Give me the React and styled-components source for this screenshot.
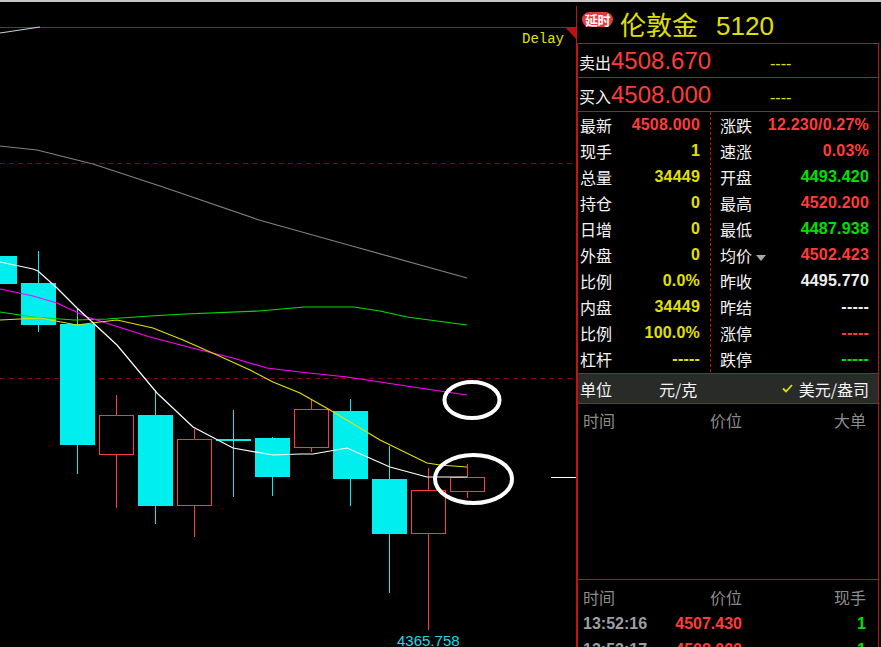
import React from "react";
import styled, { createGlobalStyle } from "styled-components";

const RED_LINE = "#c41212";
const RED = "#ff3b3b";
const YELLOW = "#e0e000";
const GREEN = "#00e000";
const WHITE = "#f4f4f4";
const GRAY = "#8c8c8c";
const CYAN = "#00eeee";

const GlobalStyle = createGlobalStyle`
  html, body {
    margin: 0;
    padding: 0;
    background: #000;
  }
  body {
    font-family: "Noto Sans CJK SC", "Liberation Sans", sans-serif;
  }
`;

const Screen = styled.div`
  width: 881px;
  height: 647px;
  background: #000;
  overflow: hidden;
  display: flex;
  flex-direction: column;
`;

const TopBar = styled.div`
  height: 2px;
  flex: none;
  background: #c6c6c6;
`;

const Main = styled.div`
  display: flex;
  flex: 1;
  min-height: 0;
`;

const ChartArea = styled.div`
  width: 576px;
  flex: none;
  svg {
    display: block;
  }
`;

const Panel = styled.div`
  flex: 1;
  display: flex;
  flex-direction: column;
  margin-top: 4px;
  border-left: 1px solid ${RED_LINE};
  min-width: 0;
  min-height: 0;
`;

const PanelHeader = styled.div`
  height: 37px;
  display: flex;
  align-items: center;
  padding-left: 5px;
  flex: none;
`;

const Badge = styled.span`
  align-self: flex-start;
  margin-top: 6px;
  width: 31px;
  height: 15px;
  border-radius: 8px;
  background: #e43a3a;
  color: #fff;
  font-size: 13px;
  font-weight: bold;
  line-height: 15px;
  text-align: center;
  letter-spacing: -0.5px;
`;

const Title = styled.span`
  margin-left: 7px;
  color: ${YELLOW};
  font-size: 26px;
  line-height: 30px;
`;

const Code = styled.span`
  margin-left: 18px;
  font-family: "Liberation Sans", sans-serif;
`;

const Box = styled.div`
  flex: 1;
  display: flex;
  flex-direction: column;
  border: 1px solid ${RED_LINE};
  border-bottom: none;
  margin-right: 2px;
  min-height: 0;
  overflow: hidden;
`;

const QuoteRow = styled.div`
  height: 34px;
  flex: none;
  box-sizing: border-box;
  border-bottom: 1px solid ${RED_LINE};
  display: grid;
  grid-template-columns: 191px 1fr;
  align-items: baseline;
  padding: 4px 0 0 1px;
`;

const QuoteMain = styled.div`
  display: flex;
  align-items: baseline;
`;

const QuoteLabel = styled.span`
  color: ${WHITE};
  font-size: 16px;
`;

const QuoteValue = styled.span`
  color: ${RED};
  font-family: "Liberation Sans", sans-serif;
  font-size: 24px;
  line-height: 26px;
`;

const QuoteDash = styled.span`
  color: ${YELLOW};
  font-family: "Liberation Sans", sans-serif;
  font-size: 16px;
`;

const Stats = styled.div`
  display: grid;
  grid-template-columns: 133px 1fr;
  border-bottom: 1px solid ${RED_LINE};
  padding-bottom: 1px;
  flex: none;
`;

const StatCol = styled.div`
  display: flex;
  flex-direction: column;
  box-sizing: border-box;
  padding: ${(p) => (p.left ? "0 10px 0 2px" : "0 9px 0 9px")};
  border-right: ${(p) => (p.left ? `1px dashed ${RED_LINE}` : "none")};
`;

const StatRow = styled.div`
  height: 26px;
  display: flex;
  align-items: center;
  justify-content: space-between;
`;

const Label = styled.span`
  color: ${WHITE};
  font-size: 16px;
  line-height: 26px;
  display: flex;
  align-items: center;
`;

const Caret = styled.i`
  width: 0;
  height: 0;
  margin: 6px 0 0 4px;
  border-left: 5px solid transparent;
  border-right: 5px solid transparent;
  border-top: 6px solid #a8a8a8;
`;

const Value = styled.span`
  color: ${(p) => p.color};
  font-family: "Liberation Sans", sans-serif;
  font-weight: bold;
  font-size: 16px;
  letter-spacing: 0.2px;
`;

const UnitRow = styled.div`
  height: 29px;
  flex: none;
  display: flex;
  align-items: center;
  background: #282b27;
  border-bottom: 1px solid ${RED_LINE};
  padding: 0 9px 0 2px;
  color: ${WHITE};
  font-size: 16px;
`;

const UnitValue = styled.span`
  margin-left: 47px;
`;

const UnitChoice = styled.span`
  margin-left: auto;
  display: flex;
  align-items: center;
  gap: 6px;
`;

const Orders = styled.div`
  height: 176px;
  flex: none;
  border-bottom: 1px solid ${RED_LINE};
  padding-top: 4px;
  box-sizing: border-box;
`;

const Ticks = styled.div`
  flex: 1;
  min-height: 0;
  padding-top: 5px;
`;

const GridRow = styled.div`
  display: grid;
  grid-template-columns: 77px 82px 1fr;
  padding: 0 12px 0 5px;
  height: ${(p) => (p.head ? 24 : 26)}px;
  margin-bottom: ${(p) => (p.head ? 2 : 0)}px;
  align-items: center;
  & > :not(:first-child) {
    text-align: right;
  }
`;

const HeadCell = styled.span`
  color: ${GRAY};
  font-size: 16px;
`;

const Cell = styled.span`
  color: ${(p) => p.color};
  font-family: "Liberation Sans", sans-serif;
  font-weight: bold;
  font-size: 16px;
`;

const candles = [
  { x: -18, top: 256, bottom: 284, high: 256, low: 284, up: false },
  { x: 21, top: 283, bottom: 325, high: 251, low: 332, up: false },
  { x: 60, top: 324, bottom: 445, high: 308, low: 474, up: false },
  { x: 99, top: 415, bottom: 455, high: 395, low: 508, up: true },
  { x: 138, top: 415, bottom: 506, high: 390, low: 524, up: false },
  { x: 177, top: 439, bottom: 506, high: 429, low: 537, up: true },
  { x: 216, top: 439, bottom: 441, high: 410, low: 497, up: false },
  { x: 255, top: 438, bottom: 477, high: 437, low: 496, up: false },
  { x: 294, top: 409, bottom: 448, high: 399, low: 452, up: true },
  { x: 333, top: 411, bottom: 479, high: 399, low: 506, up: false },
  { x: 372, top: 479, bottom: 534, high: 446, low: 593, up: false },
  { x: 411, top: 490, bottom: 534, high: 468, low: 630, up: true },
  { x: 450, top: 477, bottom: 492, high: 464, low: 498, up: true },
];

const lines = [
  { color: "#cfcfcf", pts: "0,33 40,27" },
  { color: "#808080", pts: "0,146 37,150 93,164 163,187 259,220 352,246 467,278" },
  { color: "#00e000", pts: "0,312 33,317 74,320 107,319 150,316 185,314 259,311 304,307 354,307 380,311 407,317 467,325" },
  { color: "#ff00ff", pts: "0,289 33,296 57,303 87,317 100,321 150,337 200,350 233,358 267,368 300,372 347,377 413,387 467,395" },
  { color: "#e0e000", pts: "0,320 40,318 77,325 100,322 117,320 153,328 183,340 217,355 250,370 273,382 300,393 330,410 380,440 427,463 440,465 467,467" },
  { color: "#ffffff", pts: "0,262 33,269 38,271 57,288 77,308 117,345 157,393 193,427 233,448 273,455 300,454 313,454 347,448 390,467 427,477 467,477" },
];

const KChart = () => (
  <svg width="576" height="645" viewBox="0 2 576 645">
    <line x1="0" y1="27.5" x2="576" y2="27.5" stroke="#b01414" />
    <polygon points="565,27 576,27 576,39" fill="#c01010" />
    <text x="522" y="43" fill={YELLOW} fontFamily="Liberation Mono, monospace" fontSize="14">
      Delay
    </text>
    <line x1="0" y1="163.5" x2="576" y2="163.5" stroke="#8b0000" strokeDasharray="5 4" />
    <line x1="0" y1="378.5" x2="576" y2="378.5" stroke="#8b0000" strokeDasharray="5 4" />
    {candles.map((c, i) => {
      const mid = c.x + 17.5;
      const color = c.up ? RED : CYAN;
      return (
        <g key={i} shapeRendering="crispEdges">
          <line x1={mid} y1={c.high} x2={mid} y2={c.low} stroke={color} />
          {c.up ? (
            <rect x={c.x + 0.5} y={c.top + 0.5} width="34" height={c.bottom - c.top - 1} fill="#000" stroke={color} />
          ) : (
            <rect x={c.x} y={c.top} width="35" height={c.bottom - c.top} fill={color} />
          )}
        </g>
      );
    })}
    {lines.map((l, i) => (
      <polyline key={i} points={l.pts} fill="none" stroke={l.color} strokeWidth="1.2" />
    ))}
    <line x1="551" y1="477.5" x2="576" y2="477.5" stroke="#fff" />
    <ellipse cx="472" cy="400" rx="27.5" ry="18" fill="none" stroke="#fff" strokeWidth="4" />
    <ellipse cx="473.5" cy="479" rx="38.5" ry="24" fill="none" stroke="#fff" strokeWidth="4" />
    <text x="397" y="646" fill="#18dce6" fontFamily="Liberation Sans, sans-serif" fontSize="15">
      4365.758
    </text>
  </svg>
);

const leftStats = [
  ["最新", "4508.000", RED],
  ["现手", "1", YELLOW],
  ["总量", "34449", YELLOW],
  ["持仓", "0", YELLOW],
  ["日增", "0", YELLOW],
  ["外盘", "0", YELLOW],
  ["比例", "0.0%", YELLOW],
  ["内盘", "34449", YELLOW],
  ["比例", "100.0%", YELLOW],
  ["杠杆", "-----", YELLOW],
];

const rightStats = [
  ["涨跌", "12.230/0.27%", RED],
  ["速涨", "0.03%", RED],
  ["开盘", "4493.420", GREEN],
  ["最高", "4520.200", RED],
  ["最低", "4487.938", GREEN],
  ["均价", "4502.423", RED, true],
  ["昨收", "4495.770", "#eeeeee"],
  ["昨结", "-----", "#eeeeee"],
  ["涨停", "-----", RED],
  ["跌停", "-----", GREEN],
];

const CheckMark = () => (
  <svg width="11" height="9" viewBox="0 0 11 9">
    <polyline points="1,4.5 4,7.5 10,1" fill="none" stroke={YELLOW} strokeWidth="1.8" />
  </svg>
);

export default function App() {
  return (
    <>
      <GlobalStyle />
      <Screen>
        <TopBar />
        <Main>
          <ChartArea>
            <KChart />
          </ChartArea>
          <Panel>
            <PanelHeader>
              <Badge>延时</Badge>
              <Title>
                伦敦金<Code>5120</Code>
              </Title>
            </PanelHeader>
            <Box>
              <QuoteRow>
                <QuoteMain>
                  <QuoteLabel>卖出</QuoteLabel>
                  <QuoteValue>4508.670</QuoteValue>
                </QuoteMain>
                <QuoteDash>----</QuoteDash>
              </QuoteRow>
              <QuoteRow>
                <QuoteMain>
                  <QuoteLabel>买入</QuoteLabel>
                  <QuoteValue>4508.000</QuoteValue>
                </QuoteMain>
                <QuoteDash>----</QuoteDash>
              </QuoteRow>
              <Stats>
                <StatCol left>
                  {leftStats.map(([k, v, c], i) => (
                    <StatRow key={i}>
                      <Label>{k}</Label>
                      <Value color={c}>{v}</Value>
                    </StatRow>
                  ))}
                </StatCol>
                <StatCol>
                  {rightStats.map(([k, v, c, caret], i) => (
                    <StatRow key={i}>
                      <Label>
                        {k}
                        {caret && <Caret />}
                      </Label>
                      <Value color={c}>{v}</Value>
                    </StatRow>
                  ))}
                </StatCol>
              </Stats>
              <UnitRow>
                <span>单位</span>
                <UnitValue>元/克</UnitValue>
                <UnitChoice>
                  <CheckMark />
                  美元/盎司
                </UnitChoice>
              </UnitRow>
              <Orders>
                <GridRow head>
                  <HeadCell>时间</HeadCell>
                  <HeadCell>价位</HeadCell>
                  <HeadCell>大单</HeadCell>
                </GridRow>
              </Orders>
              <Ticks>
                <GridRow head>
                  <HeadCell>时间</HeadCell>
                  <HeadCell>价位</HeadCell>
                  <HeadCell>现手</HeadCell>
                </GridRow>
                <GridRow>
                  <Cell color="#9aa0a4">13:52:16</Cell>
                  <Cell color={RED}>4507.430</Cell>
                  <Cell color={GREEN}>1</Cell>
                </GridRow>
                <GridRow>
                  <Cell color="#9aa0a4">13:52:17</Cell>
                  <Cell color={RED}>4508.000</Cell>
                  <Cell color={GREEN}>1</Cell>
                </GridRow>
              </Ticks>
            </Box>
          </Panel>
        </Main>
      </Screen>
    </>
  );
}
